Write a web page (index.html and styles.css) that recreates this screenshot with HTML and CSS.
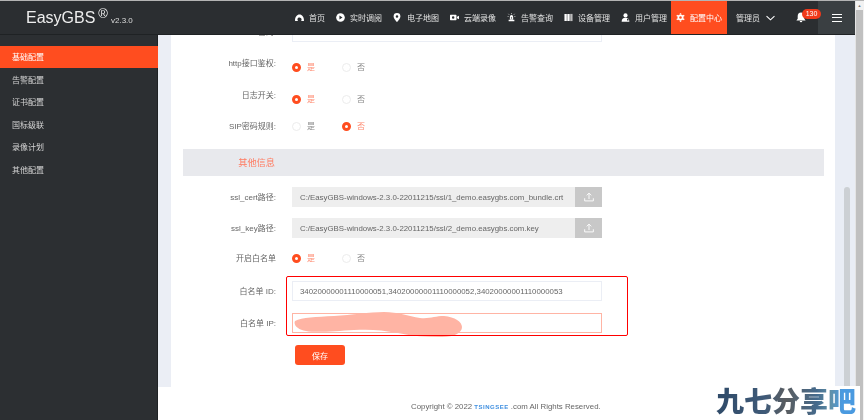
FILE: index.html
```html
<!DOCTYPE html>
<html lang="zh">
<head>
<meta charset="utf-8">
<title>EasyGBS</title>
<link rel="stylesheet" href="styles.css">
</head>
<body>
<div class="page">
  <div class="app">
    <header class="topbar">
      <div class="logo"><span class="logo-name">EasyGBS</span><span class="logo-reg">®</span><span class="logo-ver">v2.3.0</span></div>
      <nav class="nav">
        <a class="nav-item"><svg class="ico" viewBox="0 0 10 10"><path fill="#fff" d="M0 8.2C0 4.4 2.2 1.6 5 1.6s5 2.8 5 6.6c0 .5-.3.8-.8.8H6.600c.5-.4.7-1 .7-1.500A2.300 2.300 0 1 0 3.400 8.900c-.1 0-.2.1-.2.1H.8C.3 9 0 8.700 0 8.200z"/></svg>首页</a>
        <a class="nav-item"><svg class="ico" viewBox="0 0 10 10"><circle cx="5" cy="5" r="4.800" fill="#fff"/><path fill="#2b2e31" d="M3.800 2.800 7.200 5 3.800 7.200z"/></svg>实时调阅</a>
        <a class="nav-item nav-pin"><svg class="ico ico-pin" viewBox="0 0 8 10"><path fill="#fff" fill-rule="evenodd" d="M4 0a3.800 3.800 0 0 1 3.800 3.800C7.800 6.200 4 10 4 10S.2 6.200.2 3.800A3.800 3.800 0 0 1 4 0zm0 2.400a1.400 1.400 0 1 0 0 2.800 1.400 1.400 0 0 0 0-2.800z"/></svg>电子地图</a>
        <a class="nav-item"><svg class="ico" viewBox="0 0 10 10"><path fill="#fff" fill-rule="evenodd" d="M.6 2h6c.3 0 .6.3.6.600v4.800c0 .3-.3.6-.6.6h-6C.3 8 0 7.700 0 7.400V2.600C0 2.300.3 2 .6 2zm2.900 1.600a1.400 1.400 0 1 0 0 2.800 1.400 1.400 0 0 0 0-2.800zM7.800 4.200 10 3v4L7.800 5.800z"/></svg>云端录像</a>
        <a class="nav-item"><svg class="ico" viewBox="0 0 10 11"><path fill="#fff" d="M3 4.500a2 2 0 0 1 4 0V8H3zM1.500 8.400h7V10h-7z"/><path stroke="#fff" stroke-width=".7" d="M5 0v1.500M1.200 1l1 1.200M8.800 1l-1 1.200M.2 4.300h1.400M8.400 4.300h1.400"/><circle cx="5" cy="6" r=".8" fill="#2b2e31"/></svg>告警查询</a>
        <a class="nav-item"><svg class="ico" viewBox="0 0 10 10"><path fill="#fff" d="M.5 1h2.600v8H.5zM3.700 1h2.600v8H3.700z"/><path fill="#bbb" d="M6.900 1h2.600v8H6.900z"/></svg>设备管理</a>
        <a class="nav-item"><svg class="ico" viewBox="0 0 10 10"><circle cx="5" cy="2.700" r="2.300" fill="#fff"/><path fill="#fff" d="M.7 9.800c0-3 1.500-4.500 4.300-4.500s4.300 1.500 4.300 4.500z"/><path fill="#2b2e31" d="M6.700 6.500h1.700v1.700H6.700z"/></svg>用户管理</a>
        <a class="nav-item is-active"><svg class="ico" viewBox="0 0 10 10"><circle cx="5" cy="5" r="2.400" fill="none" stroke="#fff" stroke-width="1.900"/><path stroke="#fff" stroke-width="1.500" d="M5 .2v1.600M5 8.200v1.600M.8 2.600l1.400.8M7.800 6.600l1.400.8M.8 7.400l1.400-.8M7.800 3.400l1.400-.8"/></svg>配置中心</a>
      </nav>
      <div class="user">管理员<svg class="chevron" viewBox="0 0 10 6"><path fill="none" stroke="#fff" stroke-width="1.200" d="M.6.8 5 5 9.400.8"/></svg></div>
      <div class="bell"><svg class="bell-ico" viewBox="0 0 10 11"><path fill="#fff" d="M5 .5c2.200 0 3.300 1.600 3.300 3.700v2.500L9.600 8.400H.4l1.300-1.700V4.200C1.700 2.100 2.800.5 5 .5zM3.700 9h2.600a1.300 1.300 0 0 1-2.600 0z"/></svg><span class="badge">130</span></div>
      <button class="menu" type="button" aria-label="menu"><span></span><span></span><span></span></button>
    </header>
    <div class="body">
      <aside class="sidebar">
        <a class="side-item is-active">基础配置</a>
        <a class="side-item">告警配置</a>
        <a class="side-item">证书配置</a>
        <a class="side-item">国标级联</a>
        <a class="side-item">录像计划</a>
        <a class="side-item">其他配置</a>
      </aside>
      <div class="main">
        <div class="main-col">
          <section class="card">
            <form class="form">
              <div class="row row-first"><label class="lbl">密码:</label><div class="field"></div></div>
              <div class="row row-http"><label class="lbl lbl-up">http接口鉴权:</label><div class="radios"><span class="radio on"><i></i>是</span><span class="radio"><i></i>否</span></div></div>
              <div class="row row-log"><label class="lbl lbl-up">日志开关:</label><div class="radios"><span class="radio on"><i></i>是</span><span class="radio"><i></i>否</span></div></div>
              <div class="row row-sip"><label class="lbl">SIP密码规则:</label><div class="radios"><span class="radio"><i></i>是</span><span class="radio on"><i></i>否</span></div></div>
              <div class="section"><span class="section-title">其他信息</span></div>
              <div class="row row-cert"><label class="lbl">ssl_cert路径:</label><div class="field field-off"><span class="val">C:/EasyGBS-windows-2.3.0-22011215/ssl/1_demo.easygbs.com_bundle.crt</span><span class="up"><svg viewBox="0 0 12 12"><path fill="none" stroke="#fff" stroke-width="1.100" d="M.8 7.500v3.200h10.400V7.500M6 8.500V1.500M3.300 4 6 1.300 8.700 4"/></svg></span></div></div>
              <div class="row row-key"><label class="lbl">ssl_key路径:</label><div class="field field-off"><span class="val">C:/EasyGBS-windows-2.3.0-22011215/ssl/2_demo.easygbs.com.key</span><span class="up"><svg viewBox="0 0 12 12"><path fill="none" stroke="#fff" stroke-width="1.100" d="M.8 7.500v3.200h10.400V7.500M6 8.500V1.500M3.300 4 6 1.300 8.700 4"/></svg></span></div></div>
              <div class="row row-white"><label class="lbl">开启白名单</label><div class="radios"><span class="radio on"><i></i>是</span><span class="radio"><i></i>否</span></div></div>
              <div class="whitelist">
                <div class="row"><label class="lbl">白名单 ID:</label><div class="field"><span class="val">34020000001110000051,34020000001110000052,34020000001110000053</span></div></div>
                <div class="row row-ip"><label class="lbl">白名单 IP:</label><div class="field field-focus"><svg class="smear" viewBox="0 0 170 26"><path fill="#ffb4a4" d="M1 9C8 5 22 5 40 4 58 3 75 0 90 0c14 0 24 4 36 6 10 1 15-2 24-2 11 1 18 6 18 11 0 6-8 10-20 10-16 0-30-1-44-4-16-3-28-4-44-3-18 1-38 3-48 1C4 18-1 13 1 9z"/></svg></div></div>
                <div class="redbox"></div>
              </div>
              <button class="save" type="button">保存</button>
            </form>
          </section>
          <footer class="footer">Copyright © 2022 <span class="brand">Tsingsee</span> .com All Rights Reserved.</footer>
        </div>
        <div class="gutter"><div class="thumb"></div></div>
      </div>
    </div>
  </div>
  <div class="scrollbar"><span class="arrow">▲</span><div class="scroll-track"></div></div>
  <div class="watermark"><span class="watermark-text">九七分享吧</span></div>
</div>
</body>
</html>
```
FILE: styles.css
```css
* { box-sizing: border-box; }
html, body { margin: 0; height: 100%; overflow: hidden; }
body { background: #fff; font-family: "Liberation Sans", "Noto Sans CJK SC", sans-serif; color: #666; }

.page { position: relative; display: flex; width: 864px; height: 420px; border-top: 1px solid #b4b4b4; overflow: hidden; }
.app { width: 855px; height: 419px; display: flex; flex-direction: column; filter: blur(.4px); }

.topbar { height: 34px; flex: none; display: flex; align-items: center; background: #2b2e31; border-bottom: 1px solid #1f2224; color: #e2e2e2; font-size: 8px; position: relative; z-index: 2; }
.logo { width: 295px; padding-left: 26px; display: flex; align-items: baseline; color: #eee; flex: none; }
.logo-name { font-size: 16px; }
.logo-reg { font-size: 13px; margin-left: 3px; position: relative; top: -5px; }
.logo-ver { font-size: 8px; margin-left: 3px; color: #ddd; }

.nav { display: flex; align-items: stretch; height: 33px; gap: 11px; }
.nav-item { display: flex; align-items: center; gap: 5px; white-space: nowrap; }
.nav-item.is-active { background: #ff4d1f; color: #fff; padding: 0 5px; margin-left: -7px; width: 56px; }
.ico { width: 9px; height: 9px; flex: none; }
.ico-pin { width: 8px; margin-right: 1px; }

.user { display: flex; align-items: center; gap: 6px; margin-left: 9px; width: 60px; font-size: 8px; }
.chevron { width: 9px; height: 6px; }
.bell { position: relative; width: 22px; height: 33px; display: flex; align-items: center; }
.bell-ico { width: 10px; height: 11px; }
.badge { position: absolute; left: 6px; top: 8px; width: 19px; height: 10px; border-radius: 5px; background: #f0391b; color: #fff; font-size: 7px; line-height: 10px; text-align: center; }
.menu { margin-left: auto; width: 37px; height: 33px; padding: 0; border: 0; background: #3a3f42; display: flex; flex-direction: column; align-items: center; justify-content: center; gap: 2.500px; }
.menu span { display: block; width: 10px; height: 1px; background: #fff; }

.body { flex: 1; min-height: 0; display: flex; }
.sidebar { width: 158px; flex: none; padding-top: 10.500px; background: #2c2f32; border-right: 1px solid #1f2224; display: flex; flex-direction: column; }
.side-item { height: 22.500px; padding-left: 12px; display: flex; align-items: center; font-size: 8px; color: #d4d4d4; }
.side-item.is-active { background: #ff4d1f; color: #fff; margin-right: -1px; }

.main { flex: 1; min-width: 0; display: flex; }
.main-col { width: 677px; flex: none; display: flex; flex-direction: column; background: linear-gradient(#ebeef5 356px, #fff 356px); }
.gutter { flex: 1; background: #e9edf5; padding: 152px 5px 0 9px; }
.thumb { height: 100%; background: #ccd0d4; border-radius: 3px 3px 0 0; }

.card { height: 352px; flex: none; margin-left: 13px; background: #fff; overflow: hidden; padding: 0 11px 0 12px; }
.form { margin-top: -13px; }

.row { display: flex; align-items: center; height: 20px; }
.lbl { width: 93px; margin-right: 16px; padding: 0 0 2px; flex: none; text-align: right; font-size: 8px; color: #666; white-space: nowrap; }
.lbl-up { margin-bottom: 8px; }
.row-http { margin-top: 15px; }
.row-log { margin-top: 12px; }
.row-sip { margin-top: 7px; }
.row-cert { margin-top: 11px; }
.row-key { margin-top: 11px; }
.row-white { margin-top: 10px; }
.row-ip { margin-top: 12px; }

.field { width: 310px; height: 20px; border: 1px solid #ebeef5; background: #fff; display: flex; align-items: center; position: relative; font-size: 7.850px; color: #666; }
.field-off { background: #eee; border-color: #eee; }
.field-focus { border-color: #ffb4a4; }
.val { padding-left: 7px; flex: 1; min-width: 0; white-space: nowrap; }
.up { width: 27px; height: 20px; flex: none; margin-right: -1px; background: #c8c8c8; display: flex; align-items: center; justify-content: center; }
.up svg { width: 10px; height: 10px; }

.smear { position: absolute; left: 1px; top: -2px; width: 170px; height: 26px; }

.radios { display: flex; font-size: 8px; }
.radio { width: 50px; display: flex; align-items: center; gap: 6px; color: #888; padding-bottom: 2px; }
.radio i { width: 9px; height: 9px; margin-top: 2px; border-radius: 50%; border: 1px solid #ececec; background: #fff; }
.radio.on { color: #ff8a70; }
.radio.on i { border: 3px solid #ff4d1f; }

.section { margin-top: 13px; height: 27px; background: #e8e9ed; display: flex; align-items: center; }
.section-title { width: 92px; padding-bottom: 2px; text-align: right; font-size: 9.200px; color: #ff7a60; }

.whitelist { position: relative; margin-top: 13px; }
.redbox { position: absolute; left: 103px; top: -5px; width: 342px; height: 60px; border: 1.500px solid #f00; border-radius: 2px; }

.save { display: block; margin: 12px 0 0 112px; width: 50px; height: 20px; border: 0; border-radius: 3px; background: #ff4d1f; color: #fff; font: 8px "Liberation Sans", "Noto Sans CJK SC", sans-serif; }

.footer { flex: 1; padding: 15px 0 0 253px; background: #fff; font-size: 7.850px; color: #666; white-space: nowrap; }
.brand { color: #3f8fe0; font-weight: bold; font-size: 6px; letter-spacing: .5px; text-transform: uppercase; }

.scrollbar { width: 9px; flex: none; display: flex; flex-direction: column; background: #f2f2f2; border-left: 1px solid #e4e4e4; padding-right: 1px; }
.arrow { height: 9px; font-size: 4px; line-height: 9px; text-align: center; color: #777; }
.scroll-track { flex: 1; background: #c0c0c0; }

.watermark { position: absolute; right: 4px; bottom: 0; width: 144px; height: 34px; background: #fff; font-family: "Noto Sans CJK SC", sans-serif; font-weight: 900; font-size: 28px; line-height: 29px; }
.watermark-text { display: inline-block; background: linear-gradient(90deg, #2f4a68 0%, #3f5a78 35%, #5a5d60 50%, #456a8c 72%, #5f90a8 82%, #4a9ae0 90%); -webkit-background-clip: text; background-clip: text; color: transparent; }
```
